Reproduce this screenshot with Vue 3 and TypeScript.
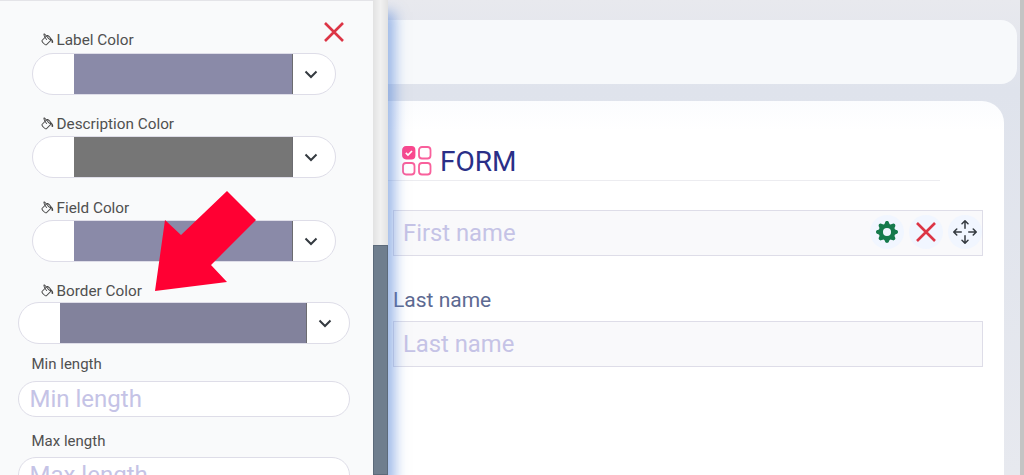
<template>
  <div class="page">
    <aside class="panel">
      <div class="panel-scroll">
        <button class="close-btn">
          <svg viewBox="0 0 24 24" width="24" height="24"><path d="M3 3 21 21M21 3 3 21" stroke="#dc3545" stroke-width="2.6" fill="none" /></svg>
        </button>
        <div v-for="item in colorFields" :key="item.label" class="color-field">
          <label class="color-label">
            <svg class="bucket" viewBox="0 0 16 16" width="14" height="14"><path :d="bucketPath" fill="#444" /></svg>{{ item.label }}
          </label>
          <div class="color-select">
            <div class="swatch" :style="{ background: item.color }"></div>
            <svg class="chev" viewBox="0 0 16 16" width="16" height="16"><path d="M2.5 5.5 8 11l5.5-5.5" fill="none" stroke="#343a40" stroke-width="2" /></svg>
          </div>
        </div>
        <div class="color-field wide">
          <label class="color-label inset">
            <svg class="bucket" viewBox="0 0 16 16" width="14" height="14"><path :d="bucketPath" fill="#444" /></svg>Border Color
          </label>
          <div class="color-select">
            <div class="swatch" :style="{ background: '#82829c' }"></div>
            <svg class="chev" viewBox="0 0 16 16" width="16" height="16"><path d="M2.5 5.5 8 11l5.5-5.5" fill="none" stroke="#343a40" stroke-width="2" /></svg>
          </div>
        </div>
        <div v-for="name in lengthFields" :key="name" class="length-field">
          <label class="length-label">{{ name }}</label>
          <input class="length-input" :placeholder="name" />
        </div>
        <svg class="arrow" viewBox="0 0 150 110" width="150" height="110">
          <path d="M47 105 57 34 73 49 119 5 148 34 103 79 119 96Z" fill="#ff0033" />
        </svg>
      </div>
      <div class="scrollbar"><div class="thumb"></div></div>
    </aside>
    <main class="main">
      <div class="top-card"></div>
      <section class="form-card">
        <header class="form-head">
          <svg viewBox="0 0 30 30" width="30" height="30">
            <rect x="1" y="1" width="11.5" height="11.5" rx="3" fill="#f9488e" stroke="#f9488e" stroke-width="1.8" />
            <path d="M3.8 6.8 6 9l4-4" fill="none" stroke="#fff" stroke-width="1.7" />
            <rect x="17" y="1" width="11.5" height="11.5" rx="3" fill="none" stroke="#f9609c" stroke-width="1.8" />
            <rect x="1" y="17" width="11.5" height="11.5" rx="3" fill="none" stroke="#f9609c" stroke-width="1.8" />
            <rect x="17" y="17" width="11.5" height="11.5" rx="3" fill="none" stroke="#f9609c" stroke-width="1.8" />
          </svg>
          <h1>FORM</h1>
        </header>
        <div class="form-field first">
          <input class="form-input" placeholder="First name" />
          <div class="tools">
            <span class="tool">
              <svg viewBox="0 0 16 16" width="22" height="22"><path fill="#157a4c" d="M9.405 1.05c-.413-1.4-2.397-1.4-2.81 0l-.1.34a1.464 1.464 0 0 1-2.105.872l-.31-.17c-1.283-.698-2.686.705-1.987 1.987l.169.311c.446.82.023 1.841-.872 2.105l-.34.1c-1.4.413-1.4 2.397 0 2.81l.34.1a1.464 1.464 0 0 1 .872 2.105l-.17.31c-.698 1.283.705 2.686 1.987 1.987l.311-.169a1.464 1.464 0 0 1 2.105.872l.1.34c.413 1.4 2.397 1.4 2.81 0l.1-.34a1.464 1.464 0 0 1 2.105-.872l.31.17c1.283.698 2.686-.705 1.987-1.987l-.169-.311a1.464 1.464 0 0 1 .872-2.105l.34-.1c1.4-.413 1.4-2.397 0-2.81l-.34-.1a1.464 1.464 0 0 1-.872-2.105l.17-.31c.698-1.283-.705-2.686-1.987-1.987l-.311.169a1.464 1.464 0 0 1-2.105-.872l-.1-.34zM8 10.93a2.929 2.929 0 1 1 0-5.860 2.929 2.929 0 0 1 0 5.858z" /></svg>
            </span>
            <span class="tool">
              <svg viewBox="0 0 24 24" width="24" height="24"><path d="M3 3 21 21M21 3 3 21" stroke="#dc3545" stroke-width="2.6" fill="none" /></svg>
            </span>
            <span class="tool">
              <svg viewBox="0 0 16 16" width="24" height="24"><path fill="#343a40" d="M7.646.146a.5.5 0 0 1 .708 0l2 2a.5.5 0 0 1-.708.708L8.5 1.707V5.500a.5.5 0 0 1-1 0V1.707L6.354 2.854a.5.5 0 1 1-.708-.708l2-2zM8 10a.5.5 0 0 1 .5.5v3.793l1.146-1.147a.5.5 0 0 1 .708.708l-2 2a.5.5 0 0 1-.708 0l-2-2a.5.5 0 0 1 .708-.708L7.5 14.293V10.500A.5.5 0 0 1 8 10zM.146 8.354a.5.5 0 0 1 0-.708l2-2a.5.5 0 1 1 .708.708L1.707 7.500H5.500a.5.5 0 0 1 0 1H1.707l1.147 1.146a.5.5 0 0 1-.708.708l-2-2zM10 8a.5.5 0 0 1 .5-.5h3.793l-1.147-1.146a.5.5 0 0 1 .708-.708l2 2a.5.5 0 0 1 0 .708l-2 2a.5.5 0 0 1-.708-.708L14.293 8.500H10.500A.5.5 0 0 1 10 8z" /></svg>
            </span>
          </div>
        </div>
        <div class="form-field">
          <label class="form-label">Last name</label>
          <input class="form-input" placeholder="Last name" />
        </div>
      </section>
    </main>
    <div class="edge"></div>
  </div>
</template>

<script setup lang="ts">
const colorFields = [
  { label: "Label Color", color: "#8a8aa8" },
  { label: "Description Color", color: "#767676" },
  { label: "Field Color", color: "#8a8aa8" },
];
const lengthFields = ["Min length", "Max length"];
const bucketPath =
  "M6.192 2.78c-.458-.677-.927-1.248-1.35-1.643a2.972 2.972 0 0 0-.71-.515c-.217-.104-.56-.205-.882-.02-.367.213-.427.63-.43.896-.003.304.064.664.173 1.044.196.687.556 1.528 1.035 2.402L.752 8.22c-.277.277-.269.656-.218.918.055.283.187.593.36.903.348.627.92 1.361 1.626 2.068.707.707 1.441 1.278 2.068 1.626.31.173.62.305.903.36.262.05.64.059.918-.218l5.615-5.615c.118.257.092.512.05.939-.03.292-.068.665-.073 1.176v.123h.003a1 1 0 0 0 1.993 0H14v-.057a1.01 1.01 0 0 0-.004-.117c-.055-1.25-.7-2.738-1.86-3.494a4.322 4.322 0 0 0-.211-.434c-.349-.626-.92-1.36-1.627-2.067-.707-.707-1.441-1.279-2.068-1.627-.31-.172-.62-.304-.903-.36-.262-.05-.64-.058-.918.219l-.217.216zM4.16 1.867c.381.356.844.922 1.311 1.632l-.704.705c-.382-.727-.66-1.402-.813-1.938a3.283 3.283 0 0 1-.131-.673c.091.061.204.15.337.274zm.394 3.965c.54.852 1.107 1.567 1.607 2.033a.5.5 0 1 0 .682-.732c-.453-.422-1.017-1.136-1.564-2.027l1.088-1.088c.054.12.115.243.183.365.349.627.92 1.361 1.627 2.068.706.707 1.44 1.278 2.068 1.626.122.068.244.13.365.183l-4.861 4.862a.571.571 0 0 1-.068-.01c-.137-.027-.342-.104-.608-.252-.524-.292-1.186-.8-1.846-1.46-.66-.66-1.168-1.32-1.46-1.846-.147-.265-.225-.47-.251-.607a.573.573 0 0 1-.01-.068l3.048-3.047zm2.87-1.935a2.44 2.44 0 0 1-.241-.561c.135.033.324.11.562.241.524.292 1.186.8 1.846 1.46.45.45.83.901 1.118 1.31a3.497 3.497 0 0 0-1.066.091 11.27 11.27 0 0 1-.76-.694c-.66-.66-1.167-1.322-1.458-1.847z";
</script>

<style>
html,
body {
  margin: 0;
  height: 100%;
  overflow: hidden;
}
</style>

<style scoped>
.page {
  display: flex;
  width: 1024px;
  height: 475px;
  overflow: hidden;
  font-family: Roboto, "Liberation Sans", sans-serif;
}

.panel {
  flex: 0 0 388px;
  display: flex;
  height: 475px;
  position: relative;
  z-index: 2;
  box-shadow: 7px 12px 12px rgba(80, 130, 215, 0.55);
}

.panel-scroll {
  flex: 1;
  position: relative;
  box-sizing: border-box;
  background: #f9fafb;
  border-top: 1px solid #e4e4e8;
  padding: 0 23px 0 17.5px;
  overflow: hidden;
}

.close-btn {
  position: absolute;
  top: 19px;
  left: 322px;
  padding: 0;
  border: 0;
  background: none;
  line-height: 0;
}

.color-field {
  margin: 0 14px -3px;
  padding-top: 24.6px;
}

.color-field:first-of-type {
  padding-top: 30.5px;
}

.color-field:not(:first-of-type) .color-label {
  margin-bottom: 4px;
}

.color-field.wide {
  margin: 0;
  padding-top: 24.8px;
}

.color-label {
  display: flex;
  align-items: center;
  height: 16px;
  margin-left: 9px;
  margin-bottom: 5px;
  font-size: 15.3px;
  color: #505050;
}

.color-field.wide .color-label.inset {
  margin-left: 23px;
  margin-bottom: 3px;
}

.bucket {
  margin-right: 2px;
}

.color-select {
  display: flex;
  align-items: center;
  height: 42px;
  box-sizing: border-box;
  border: 1px solid #dedde8;
  border-radius: 21px;
  background: #fff;
  padding-left: 41.5px;
}

.swatch {
  flex: 1;
  align-self: stretch;
  border-right: 1px solid #6c6c70;
}

.chev {
  margin: 0 16px 0 10px;
}

.length-field {
  margin-top: 12px;
}

.length-field + .length-field {
  margin-top: 16px;
}

.length-label {
  display: block;
  margin-left: 14px;
  margin-bottom: 7.5px;
  height: 17px;
  line-height: 17px;
  font-size: 15px;
  color: #505050;
}

.length-input {
  display: block;
  width: 100%;
  height: 36px;
  box-sizing: border-box;
  border: 1px solid #dedde8;
  border-radius: 18px;
  background: #fff;
  padding: 0 11px;
  font: 24px Roboto, sans-serif;
  outline: none;
}

.length-input::placeholder,
.form-input::placeholder {
  color: #c5c3e6;
  opacity: 1;
}

.arrow {
  position: absolute;
  left: 108px;
  top: 185px;
  overflow: visible;
}

.scrollbar {
  flex: 0 0 15px;
  background: linear-gradient(90deg, #e2e2e2, #f1f1f1 50%, #e2e2e2);
}

.thumb {
  margin-top: 245px;
  height: 230px;
  box-sizing: border-box;
  border: 1px solid #5c6a7a;
  background: #6f7e8e;
}

.main {
  flex: 1;
  min-width: 0;
  padding-top: 20px;
  background: linear-gradient(#e8e9ee, #dfe3ec 90px, #e7e9ef);
}

.top-card {
  height: 64px;
  margin-right: 3px;
  border-radius: 0 16px 16px 0;
  background: #f7f9fb;
}

.form-card {
  margin-top: 17px;
  margin-right: 16px;
  height: 400px;
  box-sizing: border-box;
  padding: 42px 21px 0 5px;
  border-radius: 0 22px 0 0;
  background: linear-gradient(#fbfcfe, #fff 30px);
}

.form-head {
  display: flex;
  align-items: center;
  gap: 8px;
  width: 538px;
  margin-left: -5px;
  padding: 0 0 2px 14px;
  height: 35px;
  border-bottom: 1px solid #ececf0;
}

.form-head h1 {
  margin: 2px 0 0;
  font-size: 28px;
  font-weight: 400;
  color: #2a2f87;
}

.form-field {
  position: relative;
}

.form-field.first {
  margin-top: 29px;
}

.form-label {
  display: block;
  margin-top: 33px;
  margin-bottom: 10px;
  height: 22px;
  line-height: 22px;
  font-size: 21px;
  color: #5d6a92;
}

.form-input {
  display: block;
  width: 100%;
  height: 46px;
  box-sizing: border-box;
  border: 1px solid #dedde8;
  background: #f9f9fb;
  padding: 0 9px;
  font: 23.8px Roboto, sans-serif;
  outline: none;
}

.tools {
  position: absolute;
  right: 1px;
  top: 5px;
  display: flex;
  gap: 5px;
}

.tool {
  display: flex;
  align-items: center;
  justify-content: center;
  width: 34px;
  height: 34px;
  border-radius: 50%;
  background: #f1f6ff;
}

.edge {
  flex: 0 0 4px;
  background: #c4c4c4;
}
</style>
